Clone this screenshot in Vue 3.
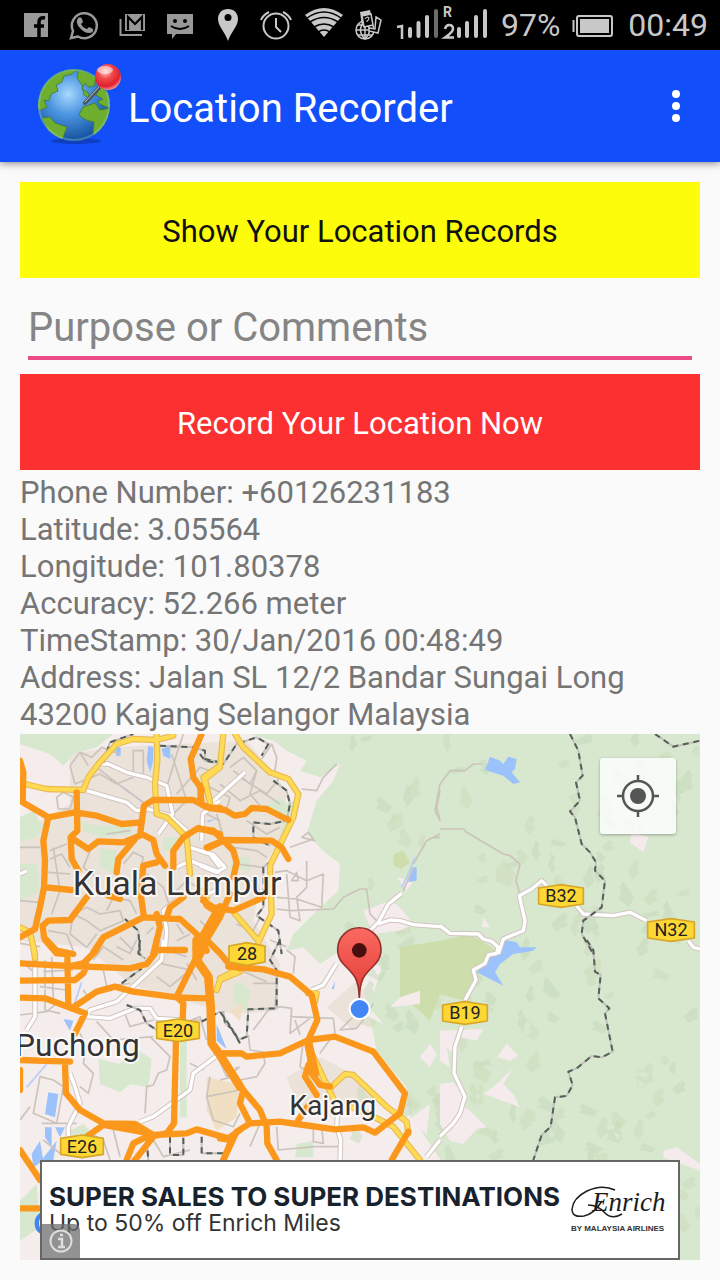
<script setup>
import { ref } from 'vue'

const comment = ref('')

const records = [
  ['Phone Number', '+60126231183'],
  ['Latitude', '3.05564'],
  ['Longitude', '101.80378'],
  ['Accuracy', '52.266 meter'],
  ['TimeStamp', '30/Jan/2016 00:48:49'],
  ['Address', 'Jalan SL 12/2 Bandar Sungai Long 43200 Kajang Selangor Malaysia'],
]

// Origin of each map tile inside the 2040 x 1578 map drawing.
const tiles = {
  nw: [0, 0],
  n: [540, 0],
  ne: [1260, 0],
  sw: [0, 618],
  s: [600, 618],
  se: [1260, 618],
}
const place = (tile) => `translate(${tiles[tile][0]} ${tiles[tile][1]})`

// Soft relief marks over the forest.
let seed = 11
const random = () => {
  seed = (seed * 16807) % 2147483647
  return seed / 2147483647
}
const relief = Array.from({ length: 170 }, () => {
  const x = Math.round(1010 + random() * 1030)
  const y = Math.round(random() * 1540)
  const w = Math.round(10 + random() * 34)
  const h = Math.round(12 + random() * 34)
  const s = random() > 0.5 ? 1 : -1
  return `M${x} ${y}l${s * w} ${-h}l${s * 12} ${h / 3}l${-s * 6} ${h / 2}l${s * 8} ${h / 3}l${-s * w} ${h / 2}z`
})
const reliefDark = relief.slice(0, 85).join('')
const reliefLight = relief.slice(85).join('')

const minor = [
  ['nw', 'M150 95L180 55L215 70L245 40L300 60M150 95L165 150L240 120L290 150L340 130M180 55L205 95M340 115L340 50L370 50L370 120M230 100L320 170L370 205M380 130L440 160L470 60L490 0M455 60L500 200M110 190L130 175L160 190L150 225L115 225ZM470 180L540 100L570 110M0 340L60 340M90 350L140 330M90 375L125 360L150 400M85 415L150 420M100 340L120 470L95 540M210 350L190 400L240 440M310 390L340 355L370 370L360 410M160 540L200 520L240 540L300 530L310 560L240 590L200 560L160 540L150 600L200 640L230 600M260 530L280 490L330 500L350 540M0 500L60 505M85 590L140 600L160 650M300 610L340 650M380 600L400 580M490 600L470 570M470 470L500 440L550 470M450 250L500 200L540 210M560 240L600 260M380 420L430 460L450 520M260 300L330 290M470 620L510 600'],
  ['n', 'M90 100L130 70L170 110L150 150L100 110M60 150L120 200L180 170L240 210M120 130L200 180L240 130M170 110L150 180L180 215M30 160L90 190L80 225M185 75L215 30L230 70L225 110M305 165L350 170L370 130L410 90M270 340L340 315L325 295L305 310L345 320M100 340L170 350L200 370M110 390L190 400M225 415L260 410L320 440L370 420L365 520L290 495L230 490M320 380L320 460L290 490L300 560L270 550L260 420M275 440L290 415L295 440ZM230 525L270 530L400 525L430 490L480 465L500 465L510 540L535 565M110 440L170 440L180 480M110 570L160 590L180 550M140 260L200 300L240 280M50 240L70 310M0 560L40 600M640 390L680 320L720 300M720 170L710 220L720 260M610 470L640 400M720 310L690 312'],
  ['ne', 'M0 150L30 110L75 110L100 90L125 90M0 285L70 285L80 295L190 360L210 365L240 390L228 440L238 475M0 150L-15 230L0 260'],
  ['sw', 'M0 10L60 20M75 60L75 210L120 220M0 60L40 95M95 50L100 180M70 95L160 90M0 225L80 215L110 190M60 140L140 150M220 60L250 20L310 60M250 90L260 140L330 130M290 20L330 40L350 0M420 70L510 90L450 140L410 110M440 30L500 50M180 280L200 320L190 370L220 400L205 460L180 440M100 420L60 410L40 520L110 550L130 440L100 420M65 550L170 550M390 290L450 350L440 390L415 400L400 435L380 440L375 520M230 245L280 300L400 290M310 210L330 260L400 240M500 70L530 120M490 250L540 230L560 300M570 410L560 470L660 450M590 345L620 410L660 380M560 470L580 540L640 560L660 520M0 540L30 500M210 580L250 600L270 660M70 600L120 640M280 570L300 650M400 600L430 650L510 630M520 240L560 240M190 150L210 180M510 370L550 390'],
  ['s', 'M100 270L145 210L180 200L215 205L210 280L270 235M85 285L90 330L180 345M0 420L40 410L50 380M60 420L110 410L135 370L130 340M100 130L170 130L165 200M60 90L140 125M200 30L225 50L220 100M210 230L340 235L345 280M250 300L240 380L270 400M360 270L400 230L430 240L410 265ZM290 160L285 230M150 0L200 20M330 445L345 510M345 430L380 410M170 560L175 630L280 620L360 620M280 560L280 605L310 610L305 560M225 240L240 285M120 550L90 620M340 285L300 340M430 240L460 190'],
]

const locals = [
  ['nw', 'M235 90L265 90L320 115L380 130L440 155L458 240L415 300M200 170L320 205L350 230L385 225L450 245L500 290M600 200L548 240L545 320M510 340L570 360L600 400M470 400L510 380L600 415M490 480L430 530L440 590L435 660M0 420L20 410'],
  ['n', 'M135 115L30 210M0 350L40 362L75 400L50 415L0 395M0 490L45 470'],
  ['sw', 'M430 0L425 60L290 185L210 210L200 230L270 235L345 205L390 205L410 235L480 240M45 60L45 230L20 270M150 400L165 440L180 490L145 560L145 590M600 340L520 400L510 450L400 530L360 545'],
  ['s', 'M275 150L310 135L350 70M355 490L350 560L362 600L360 660M660 600L620 650'],
  ['n', 'M605 478L565 510L535 565L510 590M535 570L570 558L600 560L640 572L720 578'],
  ['ne', 'M0 575L30 598L115 600L130 615L155 622L175 640M175 660L190 615L250 590L255 560L238 485L275 465L305 440L320 455M410 515L430 540L520 545L570 535L620 560M745 620L760 640L780 645'],
  ['se', 'M175 20L170 40L145 45L135 70L100 90L108 120L75 180M65 260L45 320L42 400L75 470L60 520L40 550L0 590'],
]

const yellows = [
  ['nw', 'M15 150L80 165L190 168L205 130L235 90L290 30L340 15L410 18L460 5M410 0L412 80L405 150L410 240L440 250L500 310L510 420M600 100L555 135L570 205M0 580L30 595L45 660'],
  ['n', 'M70 0L60 95L10 130L28 195M105 0L130 40L210 115L265 135L295 180L280 250L210 395L215 540L175 625M105 540L175 620M0 470L20 490'],
  ['sw', 'M40 20L45 55M590 150L600 120L660 95'],
  ['s', 'M0 115L50 90M265 160L290 160L285 185M275 340L340 475M330 445L375 402L400 405L500 500L560 545L565 580M390 500L440 520L520 560L600 660'],
]

const highways = [
  ['nw', 'M0 80L10 115L8 205L85 250L165 235L230 245L305 270L365 265L372 215L400 198L520 198L560 220L600 222M85 250L70 320L75 380L72 460L60 520L45 585L0 610M170 175L172 290L152 310L155 375L175 410M78 460L155 468M200 490L150 558L85 560L68 575L72 610L110 650L160 660M152 310L205 345L235 322L310 325L360 305L365 265M365 300L400 318L410 360L435 395M345 315L295 375L290 415M265 485L300 495M410 385L370 395L362 480L372 550M220 655L250 610L370 550L480 555L530 600L560 650M545 0L512 75L520 130L545 165L540 200M460 400L460 350L490 310L535 282L600 300M565 342L600 325M410 540L420 580L400 660M490 490L450 520L440 550M550 490L560 515L600 540'],
  ['n', 'M0 155L5 210L30 222L75 228L105 245L135 240L155 222L200 225L265 258M0 285L40 290L75 325L100 350L110 385L100 430M20 340L75 318L215 320L245 340L265 375M10 500L40 520L100 530L190 490M90 480L60 550L0 650'],
  ['sw', 'M0 70L150 78L190 70L225 35L245 0M150 78L330 85L380 72L405 40L410 0M410 30L495 30M0 122L165 120L190 100L200 75M75 0L110 40L142 42L145 195M0 173L75 175L155 205L195 220L165 280M155 205L230 155L285 140L340 155L470 172L560 175M540 30L470 170L490 190L488 240M560 0L600 40L625 70L660 85M468 300L462 550L440 580L390 590M0 360L150 365M0 390L0 450M135 375L138 460L180 510L250 550L345 552L400 585L500 580L530 568L625 595L660 570M250 555L390 580M250 555L200 590M390 585L340 610L320 660M400 590L345 660M635 600L610 660M0 630L60 720M0 805L60 805M610 340L660 340'],
  ['s', 'M25 80L130 88L210 110L275 165L292 240L265 300M0 340L65 340L80 350L180 340L265 300L345 290L460 335L555 460L540 520L465 578L430 562L345 568L230 552L180 545L90 550L50 575L10 660M0 345L70 450L120 510L140 560L142 610L170 660M70 450L60 490L90 550M265 300L275 400L300 435L330 440M265 375L255 410L290 465M565 575L515 660M0 595L35 600M235 540L262 500'],
]
const trunks = [
  ['nw', 'M600 520L530 640'],
  ['sw', 'M530 0L558 5L530 60L565 110L572 200L575 310L600 345L660 440M530 0L530 60'],
  ['s', 'M265 310L285 400'],
]

const borders = [
  ['nw', 'M250 85L270 25L340 0M420 35L520 40L555 50L555 75L600 85M315 555L355 590L360 660'],
  ['n', 'M0 60L15 80L70 90L110 30L170 10L205 30L185 65M220 140L260 170L270 210L260 260L210 270L160 265L160 310L210 335M215 380L190 400L190 520L170 545L235 590L245 660'],
  ['ne', 'M390 0L415 50L428 125L408 145L420 200L390 232L405 250L425 330L450 355L468 385L465 410L495 440L485 520L430 560L425 600L460 660M645 0L700 38L780 20'],
  ['sw', 'M360 0L355 40L375 55M305 130L365 85M320 195L360 210L380 250L410 270M545 245L600 215L625 250L660 310M450 590L450 645L490 645L490 590M545 590L545 640L610 640M380 600L385 660'],
  ['s', 'M180 0L150 60L170 90L170 205L85 208L80 290L55 300L40 270L15 250L10 215'],
  ['se', 'M440 0L460 30L465 95L482 105L475 175L508 205L495 220L518 335L485 352L455 348L410 385L385 395L398 435L380 468L345 472L332 560L305 585L280 660'],
]

const shields = [
  { name: '28', x: 681, y: 660, w: 108 },
  { name: 'B32', x: 1623, y: 486, w: 134 },
  { name: 'N32', x: 1953, y: 588, w: 140 },
  { name: 'B19', x: 1335, y: 837, w: 134 },
  { name: 'E20', x: 474, y: 889, w: 128 },
  { name: 'E26', x: 186, y: 1237, w: 128 },
]
const shieldShape = (w) => `M${-w / 2} -24L0 -34L${w / 2} -24V24L0 34L${-w / 2} 24Z`
</script>

<template>
  <div class="screen">
    <header class="status">
      <div class="notices">
        <svg viewBox="0 0 48 50"><path fill="#999" d="M12 13h24v24H12z" /><path d="M27 37V22q0-5 6-4M22 26h10" fill="none" stroke="#000" stroke-width="3.500" /></svg>
        <svg viewBox="0 0 48 50"><path d="M11 38l2-7A12.500 12.500 0 1 1 18 36.500z" fill="none" stroke="#999" stroke-width="2.500" /><path fill="#999" d="M18 18q3-2 4 1l1 3-2 2q2 4 6 5l2-2 4 2q1 4-4 4-5 0-9-5-5-5-2-10z" /></svg>
        <svg viewBox="0 0 48 50"><path d="M12.500 19v16H34" fill="none" stroke="#999" stroke-width="2" /><path fill="#999" d="M17 14h20v17H17z" /><path d="M20 30V17l7 7 7-7v13" fill="none" stroke="#000" stroke-width="2.200" /></svg>
        <svg viewBox="0 0 48 50"><path fill="#999" d="M11 14h26v20H20l-4 5v-5h-5z" /><circle cx="19" cy="21" r="2" /><circle cx="29" cy="21" r="2" /><path d="M15 26q9 6 18 0" fill="none" stroke="#000" stroke-width="2" /></svg>
        <svg viewBox="0 0 48 50"><path fill="#c8c8c8" fill-rule="evenodd" d="M24 9c6 0 10 4 10 10 0 7-7 13-10 22-3-9-10-15-10-22 0-6 4-10 10-10zm0 5a3.500 3.500 0 1 0 0 7 3.500 3.500 0 0 0 0-7z" /></svg>
        <svg viewBox="0 0 48 50"><g fill="none" stroke="#c8c8c8" stroke-width="2"><circle cx="24" cy="26" r="12.500" /><path d="M24 18v9l5 5M9 20q2-5 8-8M31 12q6 3 8 8" /></g></svg>
        <svg viewBox="0 0 48 50"><path fill="#c8c8c8" d="M5 15q19-14 38 0L24 37z" /><g fill="none" stroke="#000" stroke-width="1.500"><path d="M7 18q17-12 34 0M10 22q14-9 28 0M14 27q10-6 20 0M18 32q6-4 12 0" /></g></svg>
      </div>
      <svg class="roam" viewBox="0 0 40 50"><g fill="none" stroke="#c8c8c8" stroke-width="1.500"><circle cx="17" cy="30" r="9" /><path d="M8 30h18M17 21v18M17 21q-9 9 0 18q9-9 0-18M10 25h14M10 35h14" /></g><path fill="#c8c8c8" d="M12 12l10-2 3 13-11 3z" /><path fill="#000" stroke="#c8c8c8" stroke-width="1.500" d="M14 16l9-2 2 11-9 2zM28 17l5 3-3 13-9-2v-3l6 1z" /><path d="M17 19q2-3 4-1 0 2-2 3v1" fill="none" stroke="#c8c8c8" stroke-width="1.200" /></svg>
      <svg class="signal" viewBox="0 0 92 50">
        <g stroke="#c8c8c8" stroke-width="4" stroke-linecap="round"><path d="M14 29v7M22.500 23v13M31 17v19M63 29v7M71 23v13M80 17v19M89 11v25" /><path stroke="#6b6b6b" d="M40 11v25" /></g>
        <path d="M1 27l5-1v13M49 29q1-4 4-4 4 0 4 4 0 3-8 8.500h9" fill="none" stroke="#c8c8c8" stroke-width="2.500" />
        <text x="47" y="17" class="roaming">R</text>
      </svg>
      <span class="percent">97%</span>
      <svg class="battery" viewBox="0 0 42 50"><path d="M1.500 20v12" stroke="#c8c8c8" stroke-width="2" /><rect x="5" y="16" width="35" height="20" rx="2" fill="none" stroke="#c8c8c8" stroke-width="2" /><path fill="#c8c8c8" d="M8 19h29v14H8z" /></svg>
      <time>00:49</time>
    </header>

    <div class="appbar">
      <svg class="logo" viewBox="0 0 90 90">
        <defs>
          <radialGradient id="sea" cx=".42" cy=".35" r=".65"><stop offset="0" stop-color="#a9d8ff" /><stop offset=".45" stop-color="#4b94df" /><stop offset="1" stop-color="#15529f" /></radialGradient>
          <radialGradient id="ball" cx=".4" cy=".3" r=".7"><stop offset="0" stop-color="#ffc9c4" /><stop offset=".4" stop-color="#f04a4a" /><stop offset=".8" stop-color="#de2030" /><stop offset="1" stop-color="#f88a86" /></radialGradient>
          <clipPath id="disc"><circle cx="38" cy="44" r="36" /></clipPath>
        </defs>
        <ellipse cx="40" cy="80" rx="25" ry="3" fill="#0b2f86" opacity=".5" />
        <circle cx="38" cy="44" r="36" fill="url(#sea)" />
        <g clip-path="url(#disc)" fill="#6fae2e" stroke="#3f7d31" stroke-width=".8">
          <path d="M1 48Q3 18 30 9L41 8L36 13L28 15L26 21L20 24L22 30L15 33L13 40L8 39L11 46L5 49Z" />
          <path d="M6 57L14 56L19 62L31 66L26 79L16 78Z" />
          <path d="M43 8L60 16L58 25L52 26L49 22L46 28L52 31L53 37L48 34L46 24L41 17Z" />
          <path d="M47 46L59 42L64 49L75 47L73 63L62 74L57 73L58 61L50 59L43 54Z" />
          <path d="M64 25L75 35L75 48L66 44L61 41L67 38L60 34Z" />
        </g>
        <circle cx="38" cy="44" r="35" fill="none" stroke="#8ed1d5" stroke-opacity=".35" stroke-width="2" />
        <path d="M49 42l14-15" stroke="#4b5560" stroke-width="4" stroke-linecap="round" /><path d="M49 41l14-15" stroke="#bcc5c5" stroke-width="1" />
        <circle cx="72" cy="16" r="13" fill="url(#ball)" /><ellipse cx="69" cy="9" rx="8" ry="4" fill="#fff" opacity=".5" />
      </svg>
      <h1>Location Recorder</h1>
      <button class="more" aria-label="More options"><i></i><i></i><i></i></button>
    </div>

    <main>
      <button class="bar show">Show Your Location Records</button>
      <div class="field"><input v-model="comment" type="text" placeholder="Purpose or Comments" aria-label="Purpose or Comments" /></div>
      <button class="bar record">Record Your Location Now</button>
      <div class="info"><p v-for="[name, value] in records" :key="name">{{ name }}: {{ value }}</p></div>

      <section class="map" aria-label="Map">
        <svg class="chart" viewBox="0 0 2040 1578" preserveAspectRatio="xMidYMid slice">
          <rect width="2040" height="1578" fill="#f5edec" />
          <path class="urban" d="M150 60L280 40L680 20L800 170L790 300L730 400L700 560L780 690L770 830L640 840L490 800L330 750L200 640L0 620V290L80 250L150 210ZM920 820L1010 740L1060 830L1000 890ZM800 1030L900 970L1000 1020L1060 1080L950 1150L840 1130Z" />
          <path class="forest" d="M690 0L760 20L800 50L860 80L840 110L900 130L960 90L940 140L890 200L860 300L910 350L960 390L955 470L890 530L820 600L800 650L850 640L900 690L960 650L1050 610L1085 700L1060 780L1030 800L1090 870L1050 850L1070 950L1160 1060L1170 1150L1210 1200L1270 1290L1310 1578H2040V0Z" />
          <path class="forest" d="M0 0H280L230 40L160 60L130 95L90 60L0 30ZM0 250L40 230L70 280L50 310L0 320ZM0 390H50L60 470L0 500ZM180 260L230 275L330 270L340 300L240 310L190 290ZM240 345L290 350L280 420L240 400ZM430 310H480V350H430ZM780 300L800 210L840 190L800 300ZM730 220L780 190L810 220L790 250ZM235 975L300 990L340 940L395 975L385 1060L330 1050L300 1075L240 1050ZM640 760L660 740L690 770L680 830L640 800ZM480 920H500V1150H480ZM830 1230L880 1220L880 1270H825ZM150 1190L190 1170L210 1190L160 1220ZM640 370H690V410L630 400ZM0 1400L50 1350L60 1480L0 1520Z" />
          <path :d="reliefDark" fill="#c2d8b6" opacity=".45" /><path :d="reliefLight" fill="#cddbb9" opacity=".55" />
          <path fill="#cddeac" d="M1140 640L1260 620L1350 600L1430 650L1410 700L1370 720L1330 800L1260 780L1230 860L1200 830L1140 790ZM1120 360L1150 350L1170 385L1145 405L1120 395Z" />
          <path fill="#f5ebec" d="M1390 550L1410 580L1385 580ZM1835 295L1885 310L1870 355L1830 325ZM1260 890L1390 885L1370 920L1320 910L1300 960L1280 940L1290 1000L1260 980ZM1260 1050L1300 1045L1330 1080L1320 1110L1350 1130L1400 1180L1370 1185L1330 1230L1290 1220L1260 1170ZM1430 970L1460 930L1495 965L1470 980ZM1390 1080L1430 1050L1480 1000L1450 1050L1480 1080L1500 1120L1420 1090ZM1930 1250L1970 1240L2040 1290V1310L1930 1270ZM1030 530L1110 500L1140 520L1180 570L1140 590L1060 600ZM1130 430L1180 440L1160 470ZM1200 770L1140 790L1110 820L1200 810ZM1230 930L1250 960L1230 1000L1200 970ZM1160 1160L1230 1110L1220 1200Z" />
          <path fill="#f0dfc3" d="M560 1030L655 1050L650 1150L590 1190L560 1130ZM630 830L670 810L660 860ZM600 1090L660 1040L650 1150L600 1180Z" />
          <path fill="#9cc2fb" d="M288 40H302V65H288ZM385 35L400 40V80L390 115L380 80ZM425 45L450 35L452 75L430 65ZM560 260L590 255L565 265ZM1410 68L1440 80L1450 90L1465 68L1490 75L1485 105L1475 115L1500 145L1480 150L1450 125L1395 108ZM1455 618L1490 625L1500 640L1550 640L1540 650L1480 660L1440 690L1425 715L1450 755L1370 715L1395 690L1430 650ZM130 855L160 860L150 890ZM85 1075L115 1080L105 1150L75 1140ZM590 870L620 945L590 920ZM75 1180L95 1180V1240L75 1210ZM105 1180L135 1180L120 1210ZM35 1260L60 1220L70 1280L40 1300ZM110 1220L100 1278H65ZM1175 400H1190V440L1165 445ZM935 765L945 740L942 765Z" />
          <path fill="none" stroke="#b6cef8" stroke-width="5" d="M185 745L160 820M80 990L20 1060M310 160L370 205M1185 370L1160 430L1145 460" />

          <g class="minor"><path v-for="[t, d] in minor" :key="d" :transform="place(t)" :d="d" /></g>
          <g class="casing"><path v-for="[t, d] in locals" :key="d" :transform="place(t)" :d="d" /></g>
          <g class="local"><path v-for="[t, d] in locals" :key="d" :transform="place(t)" :d="d" /></g>
          <g class="border-base"><path v-for="[t, d] in borders" :key="d" :transform="place(t)" :d="d" /></g>
          <g class="border"><path v-for="[t, d] in borders" :key="d" :transform="place(t)" :d="d" /></g>
          <g class="yellow-edge"><path v-for="[t, d] in yellows" :key="d" :transform="place(t)" :d="d" /></g>
          <g class="yellow"><path v-for="[t, d] in yellows" :key="d" :transform="place(t)" :d="d" /></g>
          <g class="highway"><path v-for="[t, d] in highways" :key="d" :transform="place(t)" :d="d" /></g>
          <g class="trunk"><path v-for="[t, d] in trunks" :key="d" :transform="place(t)" :d="d" /></g>

          <g v-for="s in shields" :key="s.name" :transform="`translate(${s.x} ${s.y})`">
            <path :d="shieldShape(s.w)" fill="#fdd835" stroke="#d9a528" stroke-width="5" />
            <text class="shield" y="19">{{ s.name }}</text>
          </g>
          <g class="town">
            <text x="158" y="482">Kuala Lumpur</text>
            <text class="medium" x="-15" y="966">Puchong</text>
            <text class="small" x="808" y="1144">Kajang</text>
          </g>
          <defs><linearGradient id="pin" x2="0" y2="1"><stop offset="0" stop-color="#fa6a62" /><stop offset="1" stop-color="#e23c33" /></linearGradient></defs>
          <path d="M1018 792C1016 730 1000 720 970 690A65 65 0 1 1 1066 690C1036 720 1020 730 1018 792Z" fill="url(#pin)" stroke="#96302b" stroke-width="5" />
          <circle cx="1018" cy="649" r="22" fill="#480f0f" />
          <circle cx="1019" cy="825" r="30" fill="#4285f4" stroke="#fff" stroke-width="6" />
          <path d="M66 1440A32 32 0 0 0 66 1495" fill="none" stroke="#4285f4" stroke-width="13" />
        </svg>

        <button class="locate" aria-label="My location">
          <svg viewBox="0 0 42 42"><g fill="none" stroke="#555" stroke-width="2.500"><circle cx="21" cy="21" r="15" /><path d="M21 0v6M21 36v6M0 21h6M36 21h6" /></g><circle cx="21" cy="21" r="8" fill="#555" /></svg>
        </button>

        <aside class="ad">
          <a class="offer" href="#"><strong>SUPER SALES TO SUPER DESTINATIONS</strong><span>Up to 50% off Enrich Miles</span></a>
          <svg class="enrich" viewBox="0 0 98 54">
            <path d="M45 7Q32 1 17 8Q3 15 2 26Q2 35 14 33Q24 31 32 18M18 22Q28 22 35 30Q42 37 52 31" fill="none" stroke="#1c1c1c" stroke-width="1.500" />
            <text class="script" x="22" y="28">Enrich</text>
            <text class="airline" x="1" y="48">BY MALAYSIA AIRLINES</text>
          </svg>
          <button class="about" aria-label="Ad information"><svg viewBox="0 0 24 24"><circle cx="12" cy="12" r="10.500" fill="none" stroke="#ddd" stroke-width="2" /><path d="M9 10h4v8M9 18h7M11 6h3" fill="none" stroke="#ddd" stroke-width="2.500" /></svg></button>
        </aside>
      </section>
    </main>
  </div>
</template>

<style>
body { background: #fafafa; }
</style>

<style scoped>
* { box-sizing: border-box; }
.screen { min-height: 100vh; display: flex; flex-direction: column; background: #fafafa; font-family: Roboto, "Noto Sans", sans-serif; }
button { border: 0; font-family: inherit; cursor: pointer; }
svg { display: block; flex: none; }

.status { height: 50px; display: flex; align-items: center; padding: 0 12px; background: #000; color: #c8c8c8; font-size: 32px; overflow: hidden; }
.notices { display: flex; }
.notices svg { width: 48px; height: 50px; }
.roam { width: 40px; height: 50px; }
.signal { width: 92px; height: 50px; margin-left: 8px; overflow: visible; }
.roaming { font-size: 14px; font-weight: 700; fill: #c8c8c8; }
.percent { margin-left: auto; }
.battery { width: 42px; height: 50px; margin: 0 14px 0 12px; }

.appbar { height: 112px; display: flex; align-items: center; padding: 0 24px 0 36px; background: #124ffb; color: #fff; box-shadow: 0 1px 8px rgba(0, 0, 0, .5); }
.logo { width: 90px; height: 90px; }
h1 { flex: 1; margin: 0 0 0 2px; font-size: 40px; font-weight: 400; line-height: 48px; padding-top: 6px; }
.more { width: 40px; height: 64px; padding: 0; background: none; display: flex; flex-direction: column; align-items: center; justify-content: center; gap: 4px; }
.more i { width: 8px; height: 8px; border-radius: 50%; background: #fff; }

main { flex: 1; display: flex; flex-direction: column; padding: 20px; }
.bar { width: 100%; height: 96px; padding: 2px 0 0; font-size: 31px; }
.show { background: #fdfd0b; color: #111; }
.record { background: #fc3030; color: #fff; }
.field { padding: 16px 8px 14px; }
input { display: block; width: 100%; height: 66px; padding: 4px 0 0; border: 0; border-bottom: 4px solid #ec4b89; border-radius: 0; outline: 0; background: none; font: 40px/48px Roboto, "Noto Sans", sans-serif; color: #333; }
input::placeholder { color: #858585; opacity: 1; }
.info { padding: 4px 0 1px; font-size: 31px; line-height: 37px; color: #757575; }
.info p { margin: 0; }

.map { flex: 1; position: relative; min-height: 520px; overflow: hidden; background: #d6e8cd; }
.chart { position: absolute; inset: 0; width: 100%; height: 100%; }
.chart g { stroke-linejoin: round; }
.urban { fill: #ebe2da; }
.forest { fill: #d7e8cf; }
.minor { fill: none; stroke: #cbc3bc; stroke-width: 5px; }
.casing { fill: none; stroke: #d2c5c0; stroke-width: 16px; }
.local { fill: none; stroke: #fff; stroke-width: 10px; }
.border-base { fill: none; stroke: #c3c1bd; stroke-width: 6px; }
.border { fill: none; stroke: #555f58; stroke-width: 6px; stroke-dasharray: 18 14; }
.yellow-edge { fill: none; stroke: #e8ba4f; stroke-width: 19px; stroke-linecap: round; }
.yellow { fill: none; stroke: #ffdb55; stroke-width: 12px; stroke-linecap: round; }
.highway { fill: none; stroke: #fb981b; stroke-width: 19px; stroke-linecap: round; }
.trunk { fill: none; stroke: #fb981b; stroke-width: 26px; stroke-linecap: round; }
.shield { font-size: 54px; fill: #222; text-anchor: middle; }
.town { font-size: 102px; fill: #333; stroke: #fff; stroke-opacity: .75; stroke-width: 12px; paint-order: stroke; }
.medium { font-size: 95px; }
.small { font-size: 85px; }

.locate { position: absolute; top: 24px; right: 24px; width: 76px; height: 76px; display: grid; place-items: center; background: rgba(255, 255, 255, .8); border-radius: 3px; box-shadow: 0 1px 3px rgba(0, 0, 0, .3); }
.locate svg { width: 42px; height: 42px; }

.ad { position: absolute; left: 20px; right: 20px; bottom: 0; height: 100px; display: flex; align-items: center; justify-content: space-between; padding: 0 10px 0 7px; background: #fff; border: 2px solid #666; }
.offer { display: flex; flex-direction: column; color: #333; text-decoration: none; font-family: Inter, sans-serif; font-size: 23px; line-height: 27px; white-space: nowrap; }
.offer strong { color: #17222c; font-size: 26px; font-weight: 700; }
.enrich { width: 98px; height: 54px; overflow: visible; }
.script { font: italic 27px "Liberation Serif", serif; fill: #1c1c1c; }
.airline { font: bold 8px "Liberation Sans", sans-serif; fill: #333; }
.about { position: absolute; left: 0; bottom: 0; width: 38px; height: 34px; padding: 0; display: grid; place-items: center; background: rgba(110, 110, 110, .75); border-radius: 0 6px 0 0; }
.about svg { width: 24px; height: 24px; }
</style>
